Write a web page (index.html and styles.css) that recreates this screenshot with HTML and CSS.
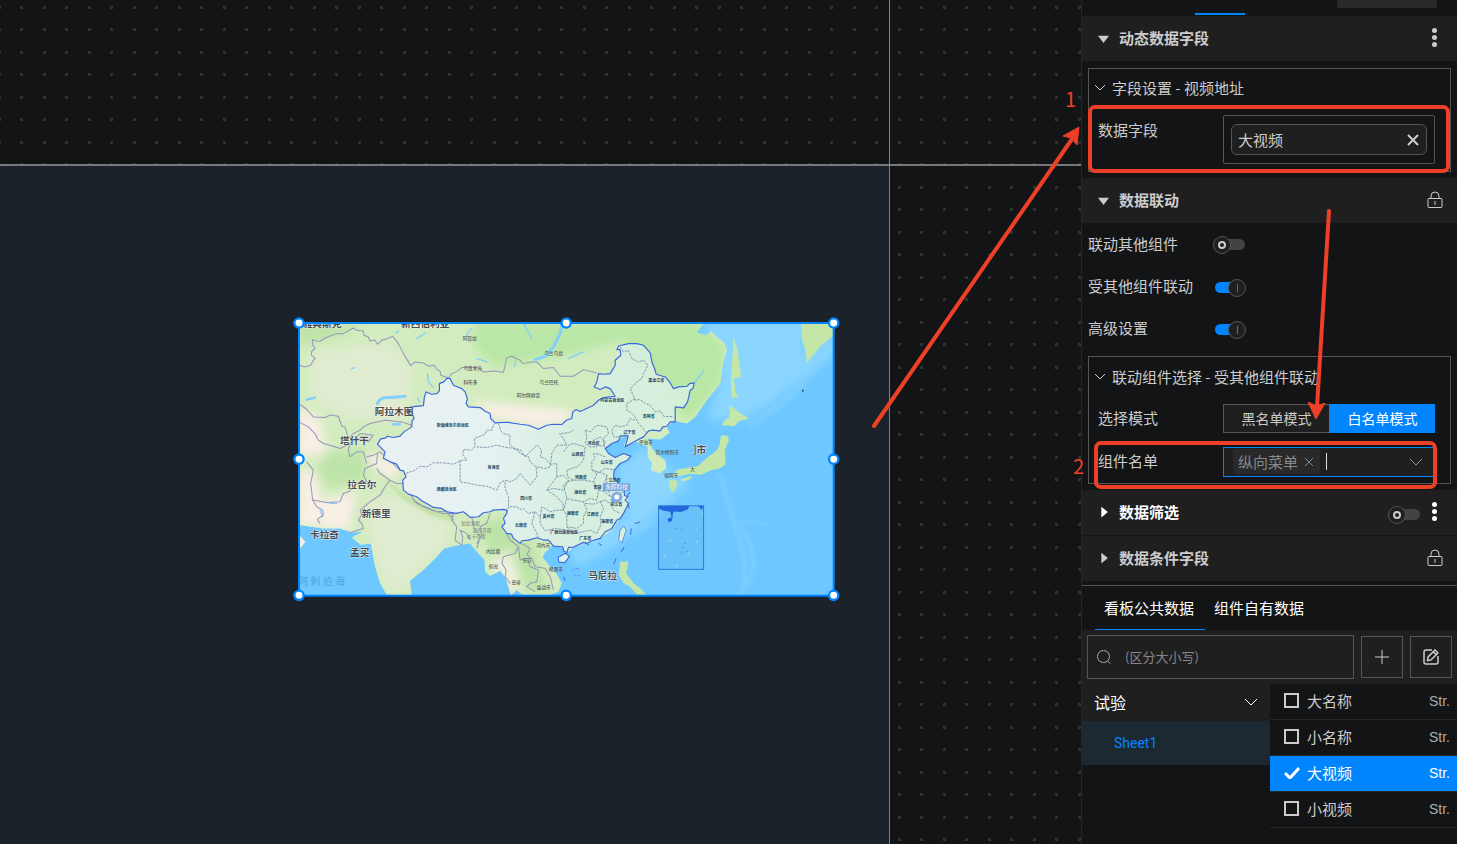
FILE: index.html
```html
<!DOCTYPE html>
<html lang="zh-CN">
<head>
<meta charset="utf-8">
<title>数据看板编辑器</title>
<link rel="stylesheet" href="styles.css">
</head>
<body>
<div class="app">
  <main class="canvas">
    <svg class="grid" aria-hidden="true">
      <defs><pattern id="dots" width="45" height="45" patternUnits="userSpaceOnUse"><path d="M20 6h3v3h-3zM43 6h2v3h-2zM0 6h1v3h-1zM20 28h3v3h-3zM43 28h2v3h-2zM0 28h1v3h-1z"/></pattern></defs>
      <rect width="100%" height="100%" fill="url(#dots)"/>
    </svg>
    <div class="artboard"></div>
    <svg class="map" viewBox="27 38 1604 820" preserveAspectRatio="none" role="img" aria-label="地图">
      <defs>
        <clipPath id="frame"><rect x="27" y="38" width="1604" height="820"/></clipPath>
        <clipPath id="landclip"><use href="#landshape"/></clipPath>
        <filter id="soft"><feGaussianBlur stdDeviation="14"/></filter>
        <filter id="soft2"><feGaussianBlur stdDeviation="4"/></filter>
        <linearGradient id="cn" x1="0" x2="1" y1="0" y2="0"><stop offset="0" stop-color="#ecf1fa"/><stop offset=".38" stop-color="#e8f2f8"/><stop offset=".62" stop-color="#d5efe3"/><stop offset="1" stop-color="#d8f0df"/></linearGradient>
      </defs>
      <g clip-path="url(#frame)">
        <rect x="27" y="38" width="1604" height="820" fill="#6ec8ff"/>
        <g fill="#8ad6ff" filter="url(#soft)">
          <path d="M1230 30H1550L1540 130 1600 90 1631 70V130L1540 200 1440 280 1350 330 1250 330 1290 200z"/>
          <path d="M1060 410L1140 480 1200 520 1120 590 1040 660 960 720 860 770 830 720 1010 620 980 470z"/>
        </g>
        <g fill="none" stroke="#8cd6ff" stroke-width="14" opacity=".4" filter="url(#soft2)">
          <path stroke-width="24" d="M1370 345Q1460 300 1520 235T1631 95"/>
          <path d="M1290 490Q1320 600 1350 700T1350 858M1350 650Q1430 760 1350 850M1030 670Q1100 640 1150 570"/>
          <path stroke-width="6" d="M1340 635L1440 640"/>
        </g>
        <path id="landshape" fill="#d3ecbf" d="M27 38H1240L1220 68 1250 75 1262 62 1285 85 1300 95 1310 120 1298 160 1290 220 1250 270 1215 320 1190 340 1165 335 1150 330 1130 352 1138 368 1110 388 1072 385 1086 415 1098 430 1125 450 1128 474 1108 490 1082 480 1085 460 1073 440 1072 410 1050 400 1040 395 1000 410 1012 377 990 385 965 400 945 415 950 430 975 442 1000 430 1022 438 1012 450 990 460 972 480 970 500 985 520 1000 540 1013 560 1015 580 990 625 965 660 930 685 890 700 850 711 830 728 818 712 785 708 762 730 758 742 780 770 798 790 815 820 805 845 770 858H700L680 840 662 858 655 830 645 800 630 782 600 798 585 785 583 750 555 720 540 700 500 706 462 715 440 740 400 780 360 812 365 858H292L270 820 255 770 242 700 212 705 185 682 218 664 190 668 150 655 100 655 27 645z"/>
        <g clip-path="url(#landclip)">
          <g filter="url(#soft)">
            <path fill="#b9e7a5" d="M550 38H1240L1310 120 1290 220 1190 340 1090 200 1000 90 850 130 620 170 560 120z"/>
            <path fill="#bde4a8" d="M27 38H230L130 80 27 110zM110 430L240 410 220 520 120 530 80 480zM350 710L430 690 450 740 370 790zM560 640L660 620 740 720 770 858 640 820z"/>
            <path fill="#e0ecd0" d="M60 120L300 100 370 180 340 330 180 330 60 260zM230 560L350 560 480 640 470 710 360 810 300 858 240 700z"/>
            <path fill="#f8efe5" d="M27 290L90 320 110 430 27 440zM27 480H70L120 640 27 655zM70 580L200 540 180 660 100 660zM230 420L340 470 300 510 230 450zM540 270L840 300 840 330 750 355 600 320z"/>
            <path fill="#edf1dc" d="M600 750L660 720 700 840 640 840z"/>
          </g>
          <path fill="#c3e2a9" d="M260 480L340 550 440 600 500 605 490 635 420 615 340 570z" filter="url(#soft2)"/>
        </g>
        <g fill="#c4e7a8">
          <path d="M1532 38H1631V75L1590 108 1550 158 1545 120 1535 90z"/>
          <path d="M1330 80L1340 110 1346 150 1353 200 1331 205 1335 245 1346 258 1324 265 1322 200 1328 120z"/>
          <path d="M1318 285L1345 305 1375 325 1347 332 1332 348 1294 345 1304 330 1318 320z"/>
          <path d="M1292 375L1312 377 1316 390 1304 420 1306 462 1290 474 1262 480 1232 494 1200 491 1145 502 1160 478 1222 468 1256 438 1280 420 1288 402z"/>
          <path d="M1137 508L1162 512 1157 535 1146 547 1138 532zM1172 507L1204 497 1202 506 1178 515z"/>
          <path d="M1000 648L1008 660 995 698 985 690 990 660z" fill="#d9f0df" stroke="#3a66d8" stroke-width="2"/>
          <path d="M990 755L1015 754 1008 790 1030 820 1050 835 1070 858H1044L1020 830 1000 820 986 795z"/>
        </g>
        <path fill="#f3efe6" d="M27 675L46 695 27 720z"/>
        <g fill="none" stroke="#82cfff" stroke-linecap="round" stroke-width="7">
          <path stroke-width="9" d="M262 280Q270 262 290 262T345 258M812 65L790 110 765 138 735 148M810 70L815 40"/>
          <path d="M50 268L75 262M310 342H330"/>
          <path stroke-width="4" d="M382 265L390 275M412 190L415 215 430 232M185 175L195 172M676 150L674 168M545 55L530 72 540 95M380 85L405 68M318 68L325 62M700 40L725 85M560 145L590 155M120 580H140M90 600L98 620M1240 180L1215 215M835 145L880 125"/>
        </g>
        <g fill="none" stroke="#9795bd" stroke-width="3" stroke-linejoin="round">
          <path d="M27 165L45 170 62 165 70 150 76 145 65 135 64 125 75 114 68 105 67 88 88 94 100 86 118 78 138 70 160 70 190 53 200 60 220 62 222 75 235 80 240 92 254 89 262 102 275 90 292 85 308 78 325 100 340 130 362 166 375 155 400 158 415 168 432 165 438 175 450 183 452 195 475 203 485 190 500 184 515 172 560 170 580 185 610 182 640 186 650 142 665 138 690 150 698 160 725 155 740 155 760 175 790 172 810 198 850 198 880 178 920 188"/>
          <path d="M27 280L50 297 70 320 105 322 120 314 145 318 155 348 165 350 175 385 190 370 210 360 220 350 240 340 285 330 335 335 365 345M27 335L55 350 75 370 85 390 100 400 130 408 150 415 180 400 200 380 210 370 250 375 235 395 205 385 190 392 180 400 175 420 180 440 200 425 220 425 230 460M50 455L70 480 62 520 68 570 110 577 150 575 160 550 175 545 200 522 230 515 220 495 225 475 260 460 262 430M230 440L250 435 270 425 300 452 330 480M260 475L270 490 300 510 320 520 340 520M68 570L80 590 98 600 100 615 82 628 90 640M300 510L285 530 270 555 240 575 210 600 215 615 205 630 215 640 220 655 180 668"/>
          <path d="M370 570L400 590 430 602 460 610 490 610 485 630 500 650 495 690 515 705 518 680 510 660 530 670 540 690M362 555L380 580 410 592 440 605 470 603 490 630M545 620L550 650 570 680 560 715M600 610L590 640 570 650 575 675 560 700M650 672L660 690 685 710 675 730 640 740 635 760 648 780 645 800 660 820M695 700L720 715 710 735 725 745 735 770 765 775 780 800 790 840M685 710L690 750 710 745 720 770 745 780 740 815 720 820 710 830 735 845"/>
        </g>
        <path fill="url(#cn)" fill-opacity=".88" stroke="#3b67dc" stroke-width="3.5" stroke-linejoin="round" d="M262 402L272 386 285 384 292 378 310 382 330 378 342 365 365 350 366 332 372 325 362 290 400 286 403 260 408 245 425 252 440 250 448 242 448 220 462 214 470 204 480 205 490 225 515 235 525 245 532 265 528 280 535 290 570 292 585 303 600 310 602 325 615 338 650 336 690 342 715 345 745 357 770 345 790 342 815 343 828 330 845 325 848 305 858 298 870 304 910 285 925 270 940 262 975 258 960 235 945 230 930 238 912 230 920 215 925 190 940 192 960 190 975 165 975 150 992 135 990 118 980 118 985 107 1015 100 1040 100 1060 105 1080 128 1085 155 1095 180 1098 192 1125 200 1138 215 1150 235 1165 230 1190 228 1198 220 1212 218 1208 235 1200 240 1192 275 1180 293 1155 290 1155 335 1140 335 1130 348 1118 350 1110 362 1085 360 1075 362 1060 380 1040 390 1005 410 1014 377 990 377 985 392 965 400 945 415 955 430 975 442 1000 430 1022 438 1012 450 990 460 972 480 970 500 985 520 990 538 1002 542 1003 556 1013 560 1005 570 1015 580 1000 610 990 625 980 630 965 655 945 665 930 685 905 692 890 700 880 697 850 711 835 712 830 728 820 722 818 710 790 708 775 690 760 690 740 683 715 690 695 692 690 700 670 685 664 672 650 670 635 650 645 640 640 625 650 610 650 600 640 598 610 600 600 605 580 608 565 620 540 622 520 605 498 610 470 605 455 595 430 592 410 580 395 572 380 560 355 552 340 540 338 510 348 500 340 482 330 480 320 462 300 455 280 444 285 425z"/>
        <path fill="#dff2e5" stroke="#315fdd" stroke-width="3" d="M804 742L825 730 838 738 824 758 806 756z"/>
        <g fill="none" stroke="#7488a4" stroke-width="2.500" stroke-dasharray="8 3" stroke-linejoin="round">
          <path d="M348 490L375 480 390 468 410 470 430 458 460 458 490 462 515 450 530 450 518 432 520 418 545 420 555 408 553 385 585 372 590 360 605 360 612 340M510 450L510 515 540 520 560 525 590 528 620 540 630 518 645 510 660 515 680 505 690 490 720 525 740 500 738 470 720 455 715 440 690 430 680 415 650 412 620 405 590 412 560 410"/>
          <path d="M625 340L632 362 640 370 660 375 658 400 675 420 690 418 705 440 720 425 740 405 755 420 750 440 765 445 780 462 800 460 800 500 785 520 770 540 800 560 818 580 820 600 800 600 780 605 765 595 755 590 750 620 735 605 715 610 700 595 690 598 680 590 655 590 650 610M645 515L645 535 655 560 655 590M740 470L765 475 780 470 785 430 800 405 830 405 820 385 808 370 835 368 850 360M770 540L790 535 820 540 835 510 820 495 800 500"/>
          <path d="M990 110L1000 125 1015 120 1025 145 1045 155 1060 150 1073 165 1060 190 1055 205 1040 215 1020 235 1035 270 1050 268 1065 280 1080 285 1095 305 1110 302 1120 318 1150 320M1035 265L1010 280 1010 300 1020 305 1035 320 1045 340 1055 350 1070 370M1035 330L1020 325 1010 345 990 350 975 345 965 360 970 380 1000 380"/>
          <path d="M885 360L900 365 920 345 950 350 955 370 940 385 940 400 945 415M885 360L890 380 885 400 900 410 920 410 910 390 930 380 945 395 940 408 922 405M820 425L835 405 850 400 885 410 880 450 870 462 860 470 830 480 832 500 850 510 880 510 910 515 920 490 905 478 905 455 915 445 910 430 925 432 945 440M905 480L925 485 950 495 950 520 970 525M850 510L830 515 820 525 830 565 850 570 880 575 900 565 920 570 925 540 910 515M830 565L820 600 830 615 830 650 860 655 880 640 880 620 890 600 880 575M885 580L910 582 930 575 940 595 930 620 932 645 920 670 900 660 880 665 850 670 830 650M930 575L945 570 960 580 970 600 990 610M750 620L750 640 765 662 795 655 830 660 850 670M735 605L725 640 740 670 745 685M925 540L945 545 960 560 980 555 1000 545M950 495L940 530 955 540 960 560M920 490L945 475 980 480"/>
        </g>
        <g fill="none" stroke="#446bd8" stroke-width="3"><path d="M1008 560l12 -14M1013 580l4 15M925 700l10 6M1021 675l2-20M1002 712l-10 14M1034 640l16 -4M978 745l-8 18M885 697l10 8M820 800l5 12" /><path d="M845 780l20 -5m-15 20l20 2m-10 -24l8 10" stroke-dasharray="2 4"/></g>
        <rect x="1105" y="587" width="135" height="191" fill="#61b8f2" fill-opacity=".45" stroke="#2e79dc" stroke-width="3"/>
        <path fill="#2467dd" d="M1106 588H1198L1192 598 1172 606 1150 604 1145 625 1140 605 1120 602 1106 596zM1224 588H1239L1234 600zM1132 626L1148 620 1144 634 1134 636z"/>
        <g fill="#3f85d5"><circle cx="1155" cy="655" r="2"/><circle cx="1175" cy="660" r="2"/><circle cx="1185" cy="700" r="2"/><circle cx="1178" cy="712" r="2"/><circle cx="1190" cy="725" r="2"/><circle cx="1175" cy="730" r="2"/></g>
        <g fill="#a5d4dc"><circle cx="1140" cy="692" r="3"/><circle cx="1218" cy="660" r="3"/><circle cx="1220" cy="695" r="3"/><circle cx="1195" cy="730" r="3"/><circle cx="1123" cy="738" r="3"/><circle cx="1160" cy="768" r="3"/><circle cx="1236" cy="610" r="3"/></g>
        <g class="city">
          <text x="38" y="49">雅典斯克</text><text x="333" y="49">新西伯利亚</text>
          <text x="254" y="315">阿拉木图</text><text x="150" y="401">塔什干</text><text x="172" y="535">拉合尔</text><text x="215" y="622">新德里</text><text x="60" y="684">卡拉奇</text><text x="180" y="738">孟买</text><text x="894" y="806">马尼拉</text><text x="1208" y="428">]市</text>
        </g>
        <text class="sea-name" x="25" y="824">阿 剌 伯 海</text>
        <g class="town">
          <text x="518" y="89">阿贝加</text><text x="762" y="135">乌兰乌德</text><text x="520" y="178">乌鲁木齐</text><text x="520" y="222">科布多</text><text x="748" y="222">乌兰巴托</text><text x="680" y="259">阿尔拜赫雷</text><text x="1046" y="402">平壤市</text><text x="1096" y="432">首尔特别市</text><text x="1122" y="502">福冈市</text><text x="1200" y="483">大</text>
          <text x="588" y="728">内比都</text><text x="596" y="775">仰光</text><text x="664" y="821">曼谷</text><text x="740" y="838">金边市</text><text x="738" y="710">河内市</text><text x="776" y="784">岘港市</text><text x="697" y="755">东京</text>
        </g>
        <g class="town faint"><text x="513" y="646">加德满都</text><text x="548" y="665">廷布首都</text><text x="530" y="684">达卡首都</text></g>
        <g class="province">
          <text x="440" y="351">新疆维吾尔自治区</text><text x="440" y="542">西藏自治区</text><text x="592" y="477">青海省</text><text x="690" y="569">四川省</text><text x="675" y="650">云南省</text><text x="757" y="624">贵州省</text><text x="780" y="672">广西壮族自治区</text><text x="930" y="275">内蒙古自治区</text><text x="1074" y="215">黑龙江省</text><text x="1058" y="323">吉林省</text><text x="1000" y="372">辽宁省</text><text x="892" y="405">河北省</text><text x="844" y="438">山西省</text><text x="932" y="462">山东省</text><text x="854" y="506">河南省</text><text x="955" y="516">江苏省</text><text x="852" y="553">湖北省</text><text x="830" y="615">湖南省</text><text x="890" y="617">江西省</text><text x="960" y="588">浙江省</text><text x="933" y="640">福建省</text><text x="867" y="690">广东省</text><text x="910" y="538">安徽</text>
        </g>
        <rect x="938" y="519" width="82" height="24" fill="#79a5df"/><text class="tag" x="945" y="538">永辉科技</text>
        <path d="M970 582l-10-15h20z" fill="#6d9be0"/><circle cx="980" cy="561" r="12" fill="#fff" stroke="#83a9e6" stroke-width="9"/>
        <path d="M1535 238l6 3-4 5z" fill="#202b35"/>
      </g>
      <rect x="27" y="38" width="1603" height="819" fill="none" stroke="#0085ff" stroke-width="6"/>
      <g fill="#fff" stroke="#0085ff" stroke-width="7"><circle cx="27" cy="38" r="14"/><circle cx="828" cy="38" r="14"/><circle cx="1630" cy="38" r="14"/><circle cx="27" cy="447" r="14"/><circle cx="1630" cy="447" r="14"/><circle cx="27" cy="856" r="14"/><circle cx="828" cy="856" r="14"/><circle cx="1630" cy="856" r="14"/></g>
    </svg>
  </main>

  <aside class="panel">
    <div class="top-tabs"><span class="top-active"></span><span class="top-button"></span></div>

    <section>
      <h2 class="section-head"><span class="tri down"></span><span class="grow">动态数据字段</span><button class="icon dots" aria-label="更多"><i></i><i></i><i></i></button></h2>
      <div class="group field-group">
        <h3 class="group-head"><svg class="chev" viewBox="0 0 12 8"><path d="M1 1l5 5 5-5"/></svg>字段设置 - 视频地址</h3>
        <div class="form-row field-row"><span class="label">数据字段</span>
          <div class="drop"><div class="pill"><span class="grow">大视频</span><button class="icon" aria-label="移除"><svg width="12" height="12" viewBox="0 0 12 12"><path d="M1 1l10 10M11 1L1 11" stroke-width="2"/></svg></button></div></div>
        </div>
      </div>
    </section>

    <section>
      <h2 class="section-head"><span class="tri down"></span><span class="grow">数据联动</span><svg class="lock" viewBox="0 0 16 18"><path d="M1 8.500q0-1 1-1h12q1 0 1 1v7q0 1-1 1H2q-1 0-1-1zM4 7V5a4 4 0 0 1 8 0v2M8 10v4"/></svg></h2>
      <div class="switches">
        <label class="switch-row"><span class="label">联动其他组件</span><input class="switch" type="checkbox"></label>
        <label class="switch-row"><span class="label">受其他组件联动</span><input class="switch" type="checkbox" checked></label>
        <label class="switch-row"><span class="label">高级设置</span><input class="switch" type="checkbox" checked></label>
      </div>
      <div class="group link-group">
        <h3 class="group-head"><svg class="chev" viewBox="0 0 12 8"><path d="M1 1l5 5 5-5"/></svg>联动组件选择 - 受其他组件联动</h3>
        <div class="form-row"><span class="label">选择模式</span><div class="modes"><button class="mode">黑名单模式</button><button class="mode on">白名单模式</button></div></div>
        <div class="form-row"><label class="label" for="names">组件名单</label>
          <div class="multi"><span class="chip">纵向菜单<svg width="8" height="8" viewBox="0 0 8 8"><path d="M0 0l8 8M8 0L0 8"/></svg></span><span class="caret"></span><input id="names" type="text"><svg class="chev" viewBox="0 0 12 8"><path d="M0 1l6 6 6-6"/></svg></div>
        </div>
      </div>
    </section>

    <div class="folded">
      <h2 class="section-head bright"><span class="tri"></span><span class="grow">数据筛选</span><input class="switch" type="checkbox" aria-label="数据筛选"><button class="icon dots" aria-label="更多"><i></i><i></i><i></i></button></h2>
      <h2 class="section-head"><span class="tri"></span><span class="grow">数据条件字段</span><svg class="lock" viewBox="0 0 16 18"><path d="M1 8.500q0-1 1-1h12q1 0 1 1v7q0 1-1 1H2q-1 0-1-1zM4 7V5a4 4 0 0 1 8 0v2M8 10v4"/></svg></h2>
    </div>

    <section class="data">
      <nav class="tabs"><button class="tab on">看板公共数据</button><button class="tab">组件自有数据</button></nav>
      <div class="tools">
        <label class="search"><svg width="14" height="14" viewBox="0 0 14 14"><circle cx="6.500" cy="6.500" r="6"/><path d="M10.500 11l3 2.500"/></svg><input type="text" placeholder="(区分大小写)" aria-label="搜索"></label>
        <button class="tool" aria-label="新增"><svg width="14" height="14" viewBox="0 0 14 14"><path d="M7 0v14M0 7h14"/></svg></button>
        <button class="tool" aria-label="编辑"><svg class="edit" width="16" height="16" viewBox="0 0 16 16"><path d="M9 1H3Q1 1 1 3v10q0 2 2 2h10q2 0 2-2V7M4.500 11.500l.6-3.600L12 1l3 3-6.900 6.900zM10.300 2.700l3 3"/></svg></button>
      </div>
      <div class="browser">
        <div class="sheets">
          <button class="source"><span class="grow">试验</span><svg class="chev" viewBox="0 0 12 8"><path d="M0 1l6 6 6-6"/></svg></button>
          <button class="sheet">Sheet1</button>
        </div>
        <div class="fields">
          <label class="field"><input type="checkbox"><span class="grow">大名称</span><small>Str.</small></label>
          <label class="field"><input type="checkbox"><span class="grow">小名称</span><small>Str.</small></label>
          <label class="field on"><input type="checkbox" checked><svg width="16" height="12" viewBox="0 0 16 12"><path d="M1 6l5 5 9-10"/></svg><span class="grow">大视频</span><small>Str.</small></label>
          <label class="field"><input type="checkbox"><span class="grow">小视频</span><small>Str.</small></label>
        </div>
      </div>
    </section>
  </aside>

  <svg class="notes" aria-hidden="true">
    <g class="outline">
      <rect x="1090" y="107" width="358" height="64" rx="5"/>
      <rect x="1096" y="443" width="339" height="44" rx="5"/>
      <path d="M874 426L1072 139M1329 211L1317 407"/>
    </g>
    <g class="heads"><path d="M1079 127L1063 136 1071 138 1077 145z"/><path d="M1316 419L1308 402 1317 406 1325 403z"/></g>
    <g class="num"><text x="1065" y="107">1</text><text x="1073" y="474">2</text></g>
  </svg>
</div>
</body>
</html>
```
FILE: styles.css
```css
*, *::before, *::after { box-sizing: border-box; }
body { margin: 0; background: #131416; color: #ccc; font: 15px/22px "Noto Sans CJK SC", sans-serif; }
button, input { font: inherit; color: inherit; }
button { background: none; border: 0; padding: 0; }
h2, h3 { margin: 0; font-size: 15px; }
svg { fill: none; stroke: currentColor; flex: none; }
.grow { flex: 1; }
.app { position: relative; display: flex; min-height: 100vh; overflow: hidden; }

/* Editing canvas */
.canvas { position: relative; flex: 1; overflow: hidden; background: #131416; }
.grid { position: absolute; inset: 0; width: 100%; height: 100%; stroke: none; }
.grid path { fill: #303133; }
.artboard { position: absolute; left: 0; top: 166px; bottom: 0; width: 889px; background: #1b222a; }
.canvas::before { content: ""; position: absolute; z-index: 1; left: 0; right: 0; top: 164px; height: 2px; background: #77787a; }
.canvas::after { content: ""; position: absolute; z-index: 1; top: 0; bottom: 0; left: 889px; width: 1px; background: #808183; }
.map { position: absolute; left: 299px; top: 323px; width: 535px; height: 273px; overflow: visible; stroke: none; }
.city { fill: #484b50; font-size: 29px; font-weight: 700; }
.city text { stroke: #fff; stroke-width: 2px; paint-order: stroke; }
.town { fill: #555b5d; font-size: 14px; font-weight: 500; }
.faint { fill: #8b978a; }
.province { fill: #153c61; font-size: 12px; font-weight: 700; }
.sea-name { fill: #48a8e8; font-size: 30px; }
.tag { fill: #fff; font-size: 17px; }

/* Settings panel */
.panel { width: 376px; flex: none; border-left: 1px solid #252627; background: #131416; }
.top-tabs { display: flex; height: 16px; padding-left: 113px; gap: 92px; }
.top-active { width: 50px; height: 2px; margin-top: 13px; background: #0085ff; }
.top-button { width: 100px; height: 8px; border-radius: 0 0 2px 2px; background: #29292a; }
.section-head { display: flex; align-items: center; height: 45px; padding: 0 14px 2px 16px; background: #1f1f1f; font-weight: 700; }
.section-head .grow { margin-left: 10px; }
.bright { color: #fff; }
.tri { width: 11px; height: 12px; background: currentColor; clip-path: polygon(30% 10%, 90% 55%, 30% 100%); }
.tri.down { clip-path: polygon(0 35%, 100% 35%, 50% 95%); }
.icon { display: grid; place-items: center; }
.dots { gap: 2px; width: 17px; }
.dots i { width: 5px; height: 5px; border-radius: 50%; background: currentColor; }
.lock { width: 16px; height: 18px; stroke-width: 1; }
.group { margin: 7px 6px 6px; border: 1px solid #555; padding: 0 15px 0 9px; }
.group-head { display: flex; align-items: center; gap: 6px; height: 38px; margin-left: -4px; font-weight: 400; }
.field-group { margin-bottom: 6px; }
.chev { width: 12px; height: 8px; }
.form-row { display: flex; align-items: center; height: 43px; }
.form-row > .label { width: 125px; padding-bottom: 2px; }
.field-row { height: 64px; align-items: flex-start; padding-top: 8px; }
.field-row > .label { padding-top: 4px; }
.drop { flex: 1; height: 49px; padding: 8px 7px; border: 1px solid #555; border-radius: 2px; }
.pill { display: flex; align-items: center; height: 31px; padding: 0 7px 0 6px; border: 1px solid #555; border-radius: 6px; background: #1f1f1f; }
.switches { padding: 0 6px; }
.switch-row { display: flex; align-items: center; height: 42px; }
.switch-row .label { width: 125px; }
.switch { position: relative; appearance: none; width: 32px; height: 11px; margin: 0; border-radius: 6px; background: #434343; }
.switch::before { content: ""; position: absolute; left: 0; top: -3px; width: 18px; height: 18px; border: 1px solid #555; border-radius: 50%; background: #1f1f1f; }
.switch::after { content: ""; position: absolute; left: 5px; top: 2px; width: 8px; height: 8px; border: 2px solid #ccc; border-radius: 50%; }
.switch:checked { width: 30px; margin: 2px 0 0 2px; background: #0085ff; }
.switch:checked::before { left: 13px; }
.switch:checked::after { left: 22px; width: 1px; border: 0; border-radius: 0; background: #0085ff; }
.link-group { height: 128px; margin-top: 7px; }
.link-group .group-head { height: 40px; }
.modes { display: flex; flex: 1; height: 29px; font-size: 14px; }
.mode { flex: 1; padding-bottom: 2px; border: 1px solid #555; border-right: 0; background: #1f1f1f; }
.mode.on { border-color: #0085ff; background: #0085ff; color: #fff; }
.multi { display: flex; align-items: center; flex: 1; height: 30px; padding: 0 12px 0 9px; border: 1px solid #0085ff; background: #1f1f1f; }
.chip { display: flex; align-items: center; gap: 7px; height: 25px; padding: 0 7px 0 5px; border-radius: 4px; background: #292929; color: #85888d; }
.caret { width: 1px; height: 17px; margin-left: 6px; background: #ddd; }
.multi input { flex: 1; min-width: 0; width: 0; padding: 0; border: 0; background: none; }
.multi .chev { color: #999; }
.folded { display: grid; gap: 1px; padding-bottom: 4px; }
.folded .switch { margin: 6px 6px 0 0; }

/* Data source browser */
.data { border-top: 1px solid #555; }
.tabs { display: flex; height: 44px; padding-left: 13px; }
.tab { padding: 0 10px 0 9px; color: #fff; }
.tab.on { padding-right: 11px; border-bottom: 1px solid #0085ff; }
.tools { display: flex; align-items: center; gap: 7px; height: 54px; padding: 0 5px; background: #1f1f1f; }
.search { display: flex; flex: 1; align-items: center; gap: 14px; height: 44px; padding: 0 9px; border: 1px solid #555; color: #aaa; }
.search input { flex: 1; min-width: 0; padding: 0; border: 0; background: none; font-size: 13px; }
.search input::placeholder { color: #888; opacity: 1; }
.tool { display: grid; place-items: center; width: 42px; height: 42px; border: 1px solid #555; }
.edit { stroke-width: 1.5; }
.browser { display: flex; }
.sheets { width: 188px; }
.source { display: flex; align-items: center; width: 100%; height: 37px; padding: 0 13px 2px 12px; background: #1f1f1f; color: #fff; font-size: 16px; text-align: left; }
.sheet { width: 100%; height: 44px; padding-left: 32px; background: #1c2933; color: #0085ff; font: 14px/20px Roboto, sans-serif; text-align: left; }
.fields { flex: 1; }
.field { display: flex; align-items: center; gap: 8px; height: 36px; padding: 0 7px 2px 14px; border-bottom: 1px solid #252627; }
.field input { appearance: none; width: 15px; height: 15px; margin: 0; border: 2px solid #ccc; }
.field small { font: 14px/20px "Liberation Sans", sans-serif; color: #aaa; }
.field.on { gap: 7px; background: #0085ff; color: #fff; }
.field.on input { position: absolute; opacity: 0; }
.field.on svg { stroke-width: 3; }
.field.on small { color: #fff; }

/* Markup drawn over the editor */
.notes { position: absolute; z-index: 2; left: 0; top: 0; width: 100%; height: 100%; stroke: none; pointer-events: none; }
.outline { stroke: #ed4026; stroke-width: 4px; stroke-linecap: round; }
.heads { fill: #ed4026; stroke: #ed4026; stroke-width: 1px; }
.num { fill: #ed4026; font: 20px/24px "Noto Sans CJK SC", sans-serif; }
```
